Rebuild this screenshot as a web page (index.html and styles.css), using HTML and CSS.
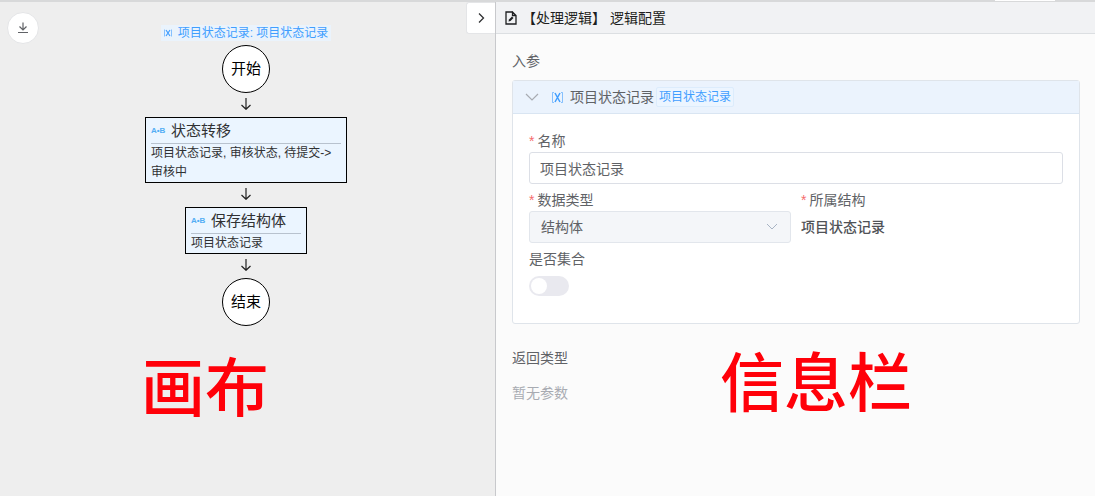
FILE: index.html
```html
<!DOCTYPE html>
<html lang="zh-CN">
<head>
<meta charset="utf-8">
<meta name="viewport" content="width=device-width, initial-scale=1">
<title>逻辑配置</title>
<link rel="stylesheet" href="styles.css">
</head>
<body>
<div class="topline"><span class="topline-tab"></span></div>
<div class="workspace">
  <main class="canvas">
    <button class="download" type="button" aria-label="下载">
      <svg width="12" height="12" viewBox="0 0 12 12" fill="none" stroke="#606266" stroke-width="1.200"><path d="M6 .5V8M2.500 4.500 6 8l3.500-3.500M1 10.500h10"/></svg>
    </button>
    <button class="collapse" type="button" aria-label="收起">
      <svg width="12" height="12" viewBox="0 0 12 12" fill="none" stroke="#303133" stroke-width="1.300"><path d="M4 1.500 8.500 6 4 10.500"/></svg>
    </button>
    <div class="flow">
      <div class="flow-param">
        <svg width="8" height="8" viewBox="0 0 8 8" fill="none" stroke="#409eff"><path d="M.5.500v7M7.500.500v7" stroke-width=".6"/><path d="M2 1l4 6M6 1 2 7" stroke-width="1.200"/></svg>
        <span>项目状态记录: 项目状态记录</span>
      </div>
      <div class="terminal">开始</div>
      <svg class="arrow" viewBox="0 0 12 12"><path d="M6 0v11M1.500 7 6 11.300 10.500 7"/></svg>
      <section class="step step-wide">
        <h3 class="step-title"><span class="step-icon">A•B</span>状态转移</h3>
        <p class="step-text">项目状态记录, 审核状态, 待提交-&gt;审核中</p>
      </section>
      <svg class="arrow" viewBox="0 0 12 12"><path d="M6 0v11M1.500 7 6 11.300 10.500 7"/></svg>
      <section class="step">
        <h3 class="step-title"><span class="step-icon">A•B</span>保存结构体</h3>
        <p class="step-text">项目状态记录</p>
      </section>
      <svg class="arrow" viewBox="0 0 12 12"><path d="M6 0v11M1.500 7 6 11.300 10.500 7"/></svg>
      <div class="terminal">结束</div>
    </div>
    <div class="note note-canvas">画布</div>
  </main>
  <aside class="panel">
    <header class="panel-head">
      <svg width="12" height="14" viewBox="0 0 12 14" fill="none" stroke="#1d1e20" stroke-width="1.300"><path d="M7.500 1H1v12h10V4.500L7.500 1v3.500H11"/><path d="M3.500 10.500 4 8.500l3-3 1.500 1.500-3 3z" fill="#1d1e20" stroke="none"/></svg>
      <h1 class="panel-title">【处理逻辑】 逻辑配置</h1>
    </header>
    <div class="panel-body">
      <h2 class="section-title">入参</h2>
      <section class="param">
        <header class="param-head">
          <button class="fold" type="button" aria-label="折叠">
            <svg width="14" height="8" viewBox="0 0 14 8" fill="none" stroke="#a8abb2" stroke-width="1.200"><path d="m1 1 6 6 6-6"/></svg>
          </button>
          <svg class="param-icon" width="11" height="11" viewBox="0 0 11 11" fill="none" stroke="#409eff"><path d="M2 .5H.5v10H2M9 .5h1.500v10H9" stroke-width=".6"/><path d="m3 1 5 9M8 1l-5 9" stroke-width="1.500"/></svg>
          <span class="param-name">项目状态记录</span>
          <span class="tag">项目状态记录</span>
        </header>
        <form class="param-form">
          <div class="field field-full">
            <label class="label required" for="name">名称</label>
            <input class="control" id="name" type="text" value="项目状态记录">
          </div>
          <div class="field">
            <label class="label required" for="type">数据类型</label>
            <div class="select-wrap">
              <select class="control" id="type" disabled><option>结构体</option></select>
              <svg class="select-arrow" width="12" height="8" viewBox="0 0 12 8" fill="none" stroke="#a8b4c4"><path d="m1 1 5 5 5-5"/></svg>
            </div>
          </div>
          <div class="field">
            <span class="label required">所属结构</span>
            <strong class="value">项目状态记录</strong>
          </div>
          <div class="field field-full">
            <label class="label" for="list">是否集合</label>
            <input class="switch" id="list" type="checkbox" role="switch">
          </div>
        </form>
      </section>
      <h2 class="section-title">返回类型</h2>
      <p class="empty">暂无参数</p>
    </div>
    <div class="note note-panel">信息栏</div>
  </aside>
</div>
</body>
</html>
```
FILE: styles.css
```css
* {
  box-sizing: border-box;
}

body {
  margin: 0;
  min-height: 100vh;
  display: flex;
  flex-direction: column;
  font-family: "Liberation Sans", "Noto Sans CJK SC", sans-serif;
  font-size: 14px;
  color: #606266;
  background: #eee;
}

h1, h2, h3, p {
  margin: 0;
  font-weight: 400;
}

button {
  padding: 0;
  display: flex;
  align-items: center;
  justify-content: center;
  cursor: pointer;
}

input, select {
  font: inherit;
  margin: 0;
}

.topline {
  height: 2px;
  padding-right: 40px;
  display: flex;
  justify-content: flex-end;
  background: #d8d9da;
}

.topline-tab {
  width: 60px;
  height: 1px;
  background: #fff;
}

.workspace {
  flex: 1;
  display: grid;
  grid-template-columns: 495fr 600fr;
}

/* Canvas */
.canvas {
  position: relative;
  padding: 23px 3px 20px 0;
  background: #eee;
}

.download {
  position: absolute;
  top: 10px;
  left: 7px;
  width: 32px;
  height: 32px;
  border: 1px solid #e4e5e7;
  border-radius: 50%;
  background: #fff;
}

.collapse {
  position: absolute;
  top: 0;
  right: 0;
  width: 29px;
  height: 32px;
  border: 1px solid #e4e5e7;
  border-right: 0;
  border-radius: 3px 0 0 3px;
  background: #fff;
}

.flow {
  display: flex;
  flex-direction: column;
  align-items: center;
}

.flow-param {
  display: flex;
  align-items: center;
  gap: 6px;
  padding: 0 3px;
  margin-bottom: 4px;
  font-size: 12px;
  line-height: 16px;
  color: #409eff;
  background: #eaf3fc;
}

.terminal {
  width: 48px;
  height: 48px;
  padding-bottom: 3px;
  display: flex;
  align-items: center;
  justify-content: center;
  border: 1px solid #000;
  border-radius: 50%;
  background: #fff;
  color: #000;
  font-size: 15px;
}

.arrow {
  width: 12px;
  height: 12px;
  margin: 5px 0 7px;
  fill: none;
  stroke: #222;
  stroke-width: 1.2;
}

.step {
  width: 122px;
  padding: 0 5px;
  border: 1px solid #000;
  background: #ebf5ff;
  color: #303133;
}

.step-wide {
  width: 202px;
}

.step-title {
  display: flex;
  align-items: center;
  gap: 5px;
  border-bottom: 1px solid #b8c2ce;
  font-size: 15px;
  line-height: 25px;
}

.step-icon {
  width: 15px;
  font-size: 8px;
  font-family: "Liberation Sans", sans-serif;
  font-weight: 700;
  color: #53aef5;
}

.step-text {
  font-size: 12px;
  line-height: 19px;
}

/* Panel */
.panel {
  position: relative;
  border-left: 1px solid #c8c9cc;
  background: #fbfbfb;
}

.panel-head {
  height: 32px;
  padding: 0 9px;
  display: flex;
  align-items: center;
  gap: 5px;
  border-bottom: 1px solid #dcdfe2;
  background: #f1f2f4;
}

.panel-title {
  padding-bottom: 2px;
  font-size: 14px;
  color: #1d1e20;
}

.panel-body {
  padding: 16px 15px 20px 16px;
}

.section-title {
  font-size: 14px;
  line-height: 22px;
}

.param {
  margin: 8px 0 23px;
  border: 1px solid #dfe4ea;
  border-radius: 3px;
  background: #fff;
}

.param-head {
  height: 33px;
  padding: 0 12px;
  display: flex;
  align-items: center;
  border-bottom: 1px solid #d9e5f2;
  background: #ebf3fd;
}

.fold {
  width: 14px;
  height: 20px;
  border: 0;
  background: none;
}

.param-icon {
  margin: 0 7px 0 13px;
}

.param-name {
  padding-bottom: 2px;
}

.tag {
  margin-left: 2px;
  padding: 0 2px;
  border: 1px solid #dcecfc;
  border-radius: 2px;
  background: #ecf5ff;
  color: #409eff;
  font-size: 12px;
  line-height: 18px;
}

.param-form {
  padding: 16px 16px 27px;
  display: grid;
  grid-template-columns: 1fr 1fr;
  column-gap: 10px;
  row-gap: 5px;
}

.field {
  display: flex;
  flex-direction: column;
  align-items: stretch;
}

.field-full {
  grid-column: 1 / -1;
}

.label {
  line-height: 22px;
}

.required::before {
  content: "*";
  margin-right: 3px;
  color: #f56c6c;
}

.control {
  width: 100%;
  height: 32px;
  padding: 0 10px;
  border: 1px solid #dcdfe6;
  border-radius: 3px;
  background: #fff;
  color: #606266;
}

.select-wrap {
  display: grid;
  align-items: center;
}

.select-wrap > * {
  grid-area: 1 / 1;
}

select.control {
  appearance: none;
  padding: 0 11px;
  background: #f4f6f9;
  border-color: #e2e6ec;
  opacity: 1;
}

.select-arrow {
  justify-self: end;
  margin-right: 13px;
  pointer-events: none;
}

.value {
  line-height: 32px;
  font-weight: 500;
  color: #505256;
}

.switch {
  appearance: none;
  width: 40px;
  height: 20px;
  margin-top: 6px;
  padding: 2px;
  border-radius: 10px;
  background: #e9e9ef;
}

.switch::before {
  content: "";
  display: block;
  width: 16px;
  height: 16px;
  border-radius: 50%;
  background: #fff;
}

.switch:checked {
  background: #409eff;
}

.switch:checked::before {
  margin-left: auto;
}

.empty {
  margin-top: 13px;
  line-height: 22px;
  color: #a8abb2;
}

/* Region captions laid over the page */
.note {
  position: absolute;
  color: #ff0009;
  font-size: 64px;
  font-weight: 500;
  line-height: 80px;
  white-space: nowrap;
  pointer-events: none;
}

.note-canvas {
  top: 347px;
  left: 141px;
}

.note-panel {
  top: 342px;
  left: 224px;
}
```
